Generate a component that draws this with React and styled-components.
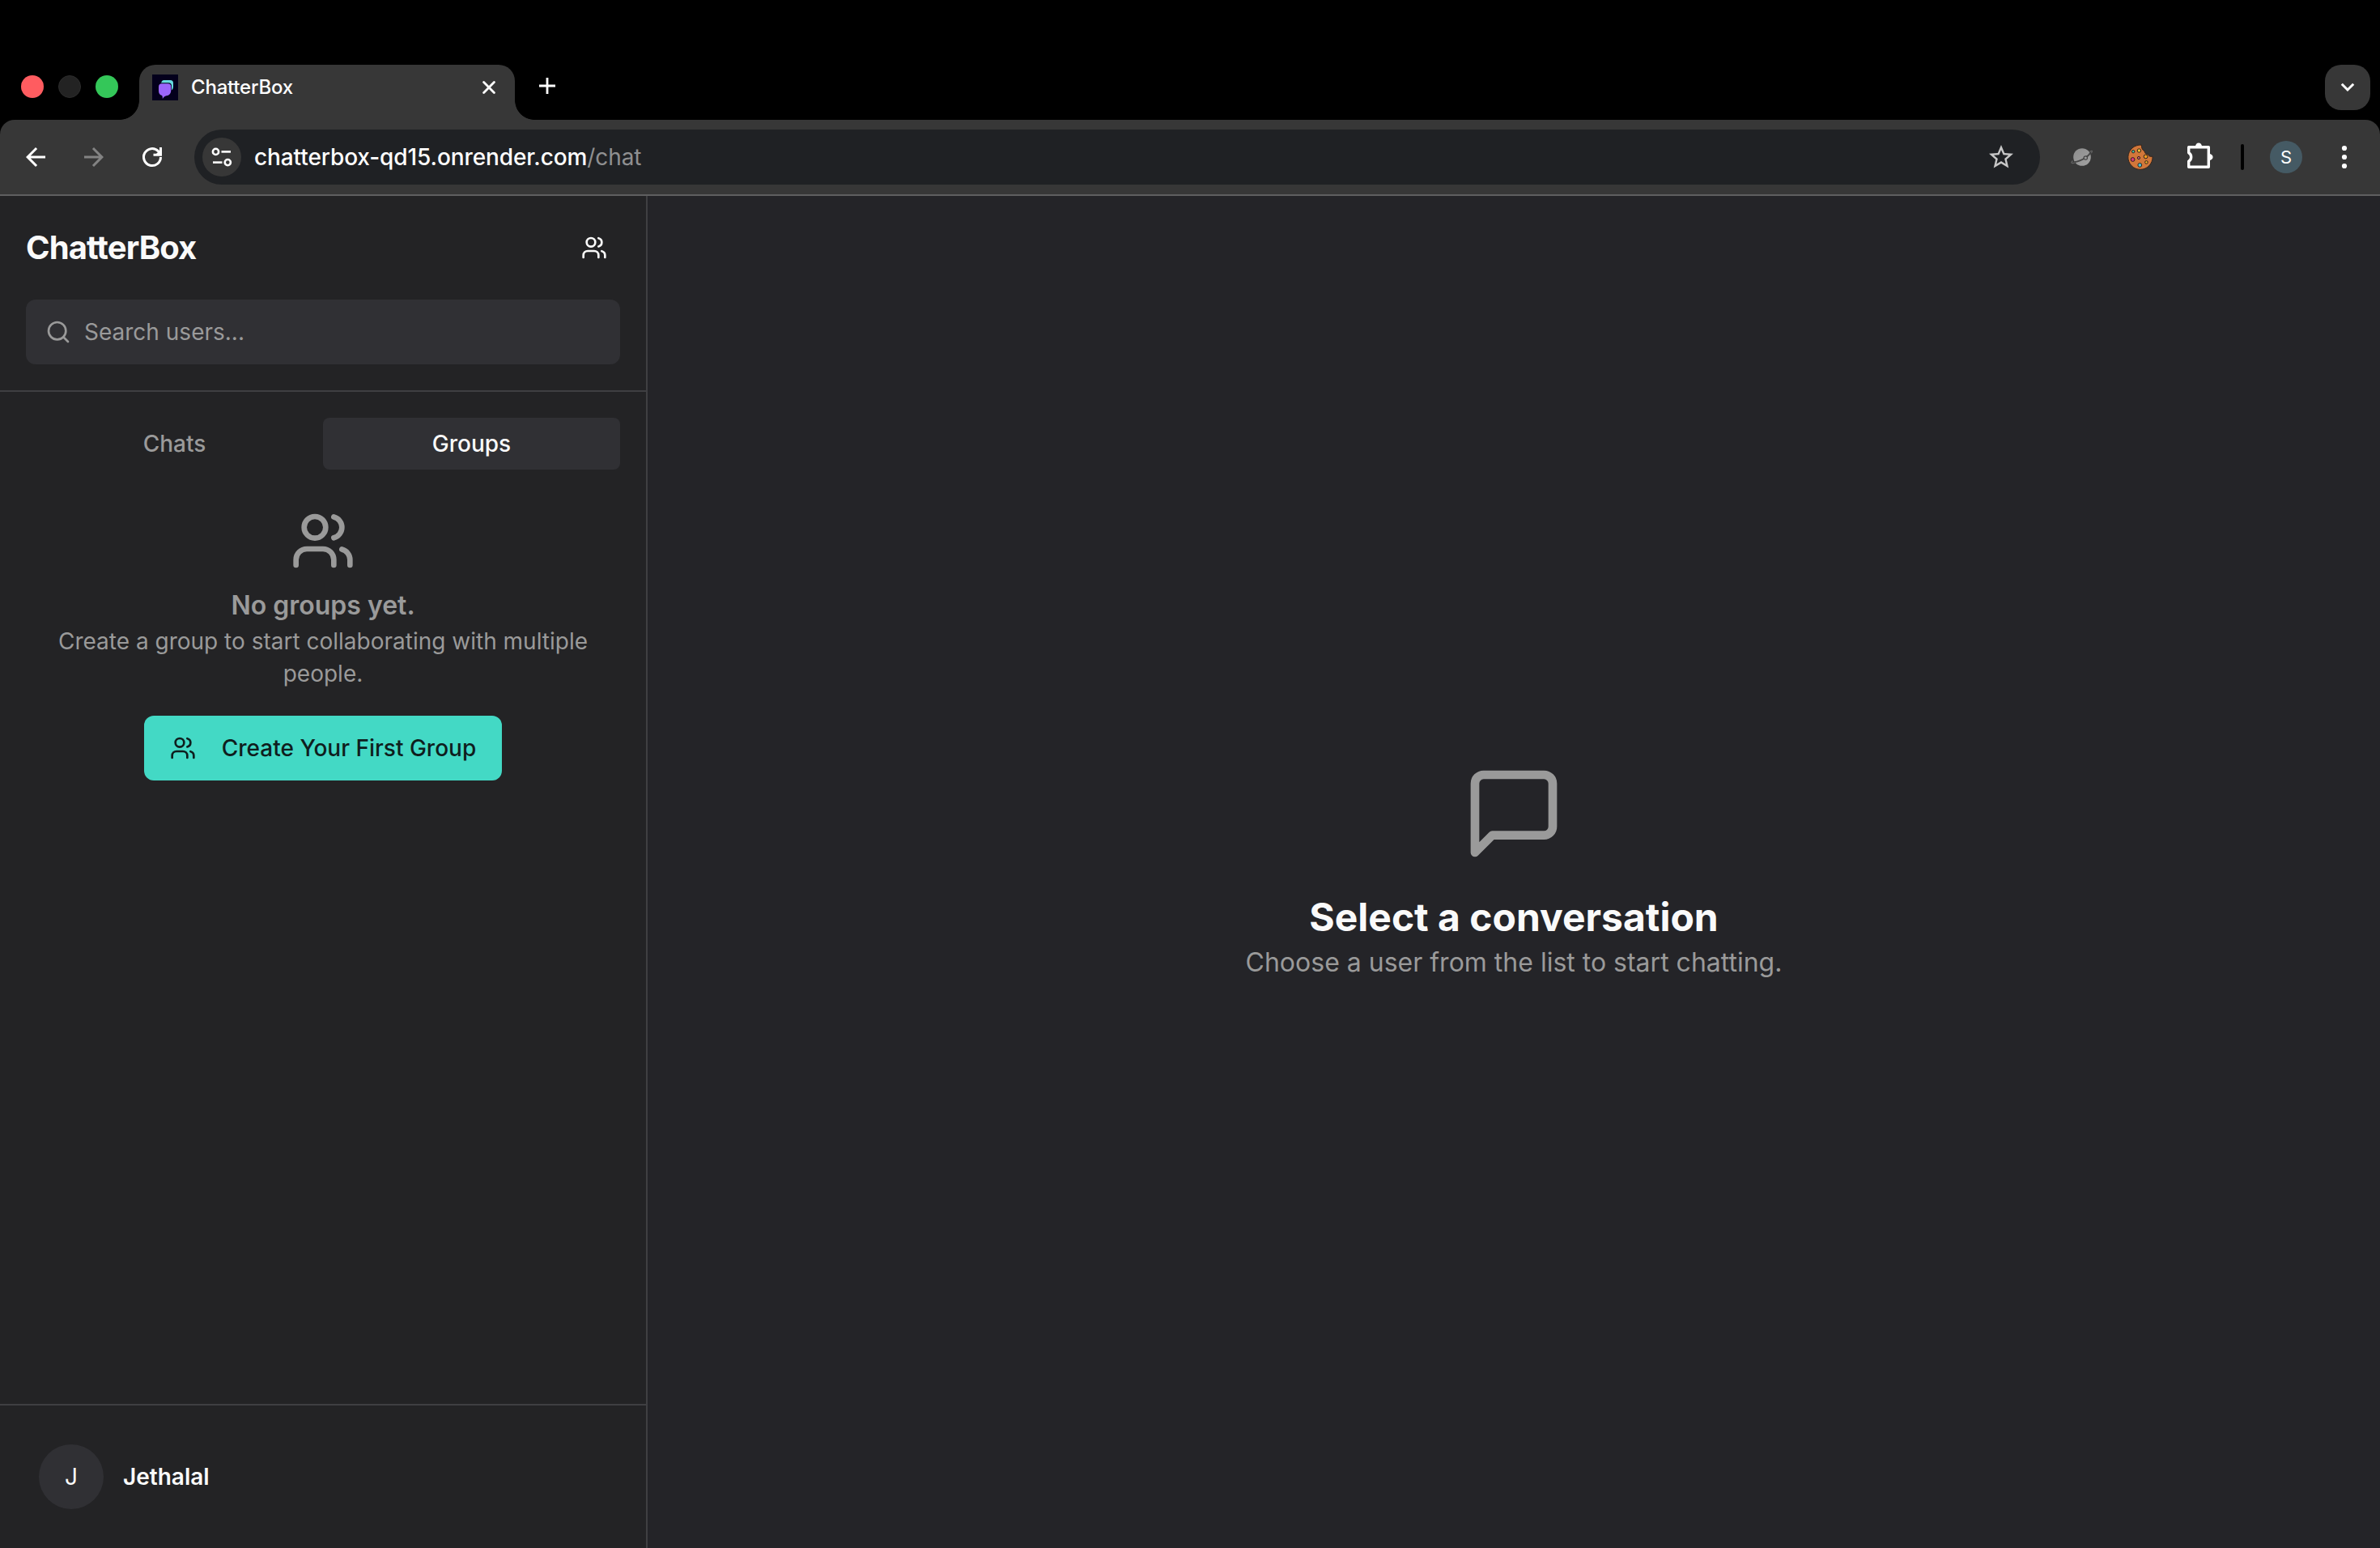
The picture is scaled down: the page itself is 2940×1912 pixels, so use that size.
import React from "react";
import styled, { createGlobalStyle, css } from "styled-components";
import { MdArrowBack, MdArrowForward, MdStarBorder } from "react-icons/md";

const color = {
  strip: "#000000",
  chrome: "#373737",
  omnibox: "#1f2124",
  chromeLine: "#5f5f60",
  sidebar: "#232325",
  main: "#242428",
  muted: "#303034",
  border: "#3f3f42",
  text: "#fafafa",
  dim: "#9a9a9a",
  accent: "#43d9c5",
};

const GlobalStyle = createGlobalStyle`
  *, *::before, *::after { box-sizing: border-box; }
  body {
    margin: 0;
    background: #000;
    font-family: Inter, "Liberation Sans", sans-serif;
    -webkit-font-smoothing: antialiased;
    overflow: hidden;
  }
  button, input { font: inherit; border: 0; padding: 0; background: none; color: inherit; }
  h1, h2, p { margin: 0; }
  svg { display: block; flex: none; }
`;

const Window = styled.div`
  width: 2940px;
  height: 1912px;
  display: flex;
  flex-direction: column;
  background: ${color.strip};
`;

/* ---------- browser tab strip ---------- */

const TabStrip = styled.header`
  height: 148px;
  padding: 80px 12px 0 26px;
  display: flex;
  align-items: stretch;
`;

const Lights = styled.div`
  display: flex;
  gap: 18px;
  padding-top: 13px;
  width: 146px;
`;

const Light = styled.span`
  width: 28px;
  height: 28px;
  border-radius: 50%;
  background: ${(p) => p.$fill};
  ${(p) => p.$ring && css`border: 1px solid ${p.$ring};`}
`;

const Tab = styled.div`
  position: relative;
  width: 464px;
  height: 68px;
  padding: 12px 24px 0 16px;
  display: flex;
  align-items: flex-start;
  border-radius: 20px 20px 0 0;
  background: ${color.chrome};
  color: #fff;

  &::before,
  &::after {
    content: "";
    position: absolute;
    bottom: 0;
    width: 24px;
    height: 24px;
  }
  &::before {
    left: -24px;
    background: radial-gradient(circle at 0 0, transparent 23.5px, ${color.chrome} 24.2px);
  }
  &::after {
    right: -24px;
    background: radial-gradient(circle at 100% 0, transparent 23.5px, ${color.chrome} 24.2px);
  }
`;

const TabTitle = styled.span`
  flex: 1;
  margin-left: 16px;
  font-size: 24px;
  line-height: 32px;
  font-weight: 500;
  letter-spacing: -0.2px;
`;

const TabClose = styled.button`
  padding-top: 8px;
`;

const NewTab = styled.button`
  margin-left: 30px;
  height: 52px;
  display: flex;
  align-items: center;
`;

const TabSearch = styled.button`
  margin-left: auto;
  width: 56px;
  height: 56px;
  border-radius: 20px;
  background: ${color.chrome};
  display: grid;
  place-items: center;
`;

/* ---------- browser toolbar ---------- */

const Toolbar = styled.nav`
  height: 94px;
  padding: 0 12px 0 8px;
  display: flex;
  align-items: center;
  background: ${color.chrome};
  border-bottom: 2px solid ${color.chromeLine};
  border-radius: 18px 18px 0 0;
`;

const Slot = styled.div`
  width: ${(p) => p.$width || 72}px;
  height: 72px;
  display: grid;
  place-items: center;
  color: ${(p) => p.$color || "#fff"};
`;

const Omnibox = styled.div`
  flex: 1;
  height: 68px;
  margin: 0 16px;
  padding: 0 30px 0 10px;
  border-radius: 34px;
  background: ${color.omnibox};
  display: flex;
  align-items: center;
`;

const SiteInfo = styled.button`
  width: 48px;
  height: 48px;
  border-radius: 50%;
  background: ${color.chrome};
  display: grid;
  place-items: center;
`;

const Url = styled.span`
  flex: 1;
  margin-left: 16px;
  font-size: 28px;
  line-height: 36px;
  font-weight: 500;
  letter-spacing: -0.1px;
  color: #fff;
`;

const UrlPath = styled.span`
  font-weight: 400;
  color: #8f9091;
`;

const Divider = styled.span`
  width: 4px;
  height: 32px;
  border-radius: 2px;
  background: #000;
`;

const Profile = styled.span`
  width: 40px;
  height: 40px;
  border-radius: 50%;
  background: #455a64;
  color: #fff;
  font-size: 22px;
  line-height: 40px;
  text-align: center;
`;

/* ---------- page ---------- */

const Page = styled.div`
  flex: 1;
  min-height: 0;
  display: flex;
`;

const Sidebar = styled.aside`
  width: 800px;
  display: flex;
  flex-direction: column;
  background: ${color.sidebar};
  border-right: 2px solid ${color.border};
  color: ${color.text};
`;

const SidebarHead = styled.div`
  padding: 32px;
  display: flex;
  flex-direction: column;
  gap: 32px;
  border-bottom: 2px solid ${color.border};
`;

const BrandRow = styled.div`
  height: 64px;
  display: flex;
  align-items: center;
  justify-content: space-between;
`;

const Brand = styled.h1`
  font-size: 40px;
  line-height: 56px;
  font-weight: 700;
  letter-spacing: -0.9px;
`;

const IconButton = styled.button`
  width: 64px;
  height: 64px;
  display: grid;
  place-items: center;
`;

const SearchField = styled.label`
  height: 80px;
  padding: 0 24px;
  display: flex;
  align-items: center;
  gap: 16px;
  border-radius: 12px;
  background: ${color.muted};
  color: ${color.dim};
`;

const SearchInput = styled.input`
  flex: 1;
  font-size: 28px;
  line-height: 40px;
  outline: none;
  &::placeholder { color: ${color.dim}; opacity: 1; }
`;

const Tabs = styled.div`
  padding: 32px 32px 0;
  display: grid;
  grid-template-columns: 1fr 1fr;
`;

const TabButton = styled.button`
  height: 64px;
  border-radius: 8px;
  font-size: 28px;
  line-height: 40px;
  font-weight: 500;
  color: ${(p) => (p.$active ? color.text : color.dim)};
  background: ${(p) => (p.$active ? color.muted : "transparent")};
`;

const EmptyGroups = styled.section`
  flex: 1;
  padding: 48px 64px 0;
  display: flex;
  flex-direction: column;
  align-items: center;
  text-align: center;
  color: ${color.dim};
`;

const EmptyTitle = styled.p`
  margin-top: 16px;
  font-size: 32px;
  line-height: 48px;
  font-weight: 600;
`;

const EmptyText = styled.p`
  font-size: 28px;
  line-height: 40px;
`;

const PrimaryButton = styled.button`
  margin-top: 32px;
  height: 80px;
  padding: 0 32px;
  display: flex;
  align-items: center;
  gap: 32px;
  border-radius: 12px;
  background: ${color.accent};
  color: #0f1e1e;
  font-size: 28px;
  font-weight: 500;
  white-space: nowrap;
`;

const Account = styled.footer`
  height: 178px;
  padding: 0 48px;
  display: flex;
  align-items: center;
  gap: 24px;
  border-top: 2px solid ${color.border};
`;

const Avatar = styled.span`
  width: 80px;
  height: 80px;
  border-radius: 50%;
  background: ${color.muted};
  font-size: 28px;
  line-height: 80px;
  text-align: center;
`;

const AccountName = styled.span`
  font-size: 28px;
  line-height: 40px;
  font-weight: 600;
`;

const Main = styled.main`
  flex: 1;
  display: flex;
  flex-direction: column;
  align-items: center;
  justify-content: center;
  background: ${color.main};
  color: ${color.dim};
`;

const MainTitle = styled.h2`
  margin-top: 32px;
  font-size: 48px;
  line-height: 64px;
  font-weight: 700;
  color: ${color.text};
`;

const MainText = styled.p`
  font-size: 32px;
  line-height: 48px;
`;

/* ---------- icons ---------- */

const Stroke = ({ size, children }) => (
  <svg width={size} height={size} viewBox="0 0 24 24" fill="none" stroke="currentColor"
    strokeWidth="2" strokeLinecap="round" strokeLinejoin="round">
    {children}
  </svg>
);

const UsersIcon = ({ size }) => (
  <Stroke size={size}>
    <path d="M16 21v-2a4 4 0 0 0-4-4H6a4 4 0 0 0-4 4v2" />
    <circle cx="9" cy="7" r="4" />
    <path d="M22 21v-2a4 4 0 0 0-3-3.87" />
    <path d="M16 3.13a4 4 0 0 1 0 7.75" />
  </Stroke>
);

const SearchIcon = ({ size }) => (
  <Stroke size={size}>
    <circle cx="11" cy="11" r="8" />
    <path d="m21 21-4.3-4.3" />
  </Stroke>
);

const MessageIcon = ({ size }) => (
  <Stroke size={size}>
    <path d="M21 15a2 2 0 0 1-2 2H7l-4 4V5a2 2 0 0 1 2-2h14a2 2 0 0 1 2 2z" />
  </Stroke>
);

const Favicon = () => (
  <svg width="32" height="32" viewBox="0 0 32 32">
    <rect width="32" height="32" fill="#04001c" />
    <path d="M14.500 7h8a3.500 3.500 0 0 1 3.500 3.500v4.500c0 2.200-1 4-2.800 5L11 11.500C11 9 12.500 7 14.500 7z" fill="#66dbe0" />
    <path d="M12 10.200h8a4 4 0 0 1 4 4V19c0 4.500-2 7.500-5.800 7.500H9.500L7.500 20v-5.300a4.500 4.500 0 0 1 4.500-4.500z" fill="#04001c" />
    <path d="M12 11.200h7.300a4 4 0 0 1 4 4V19c0 4.500-2.200 7.200-5.800 7.200-2 .3-3.500 1.800-4.700 3.800.2-1.500 0-2.800-.6-4C9.300 25.200 8 23.500 8 20v-4.800a4 4 0 0 1 4-4z" fill="#9b66fb" />
  </svg>
);

const ReloadIcon = () => (
  <svg width="36" height="36" viewBox="0 0 36 36" fill="none" stroke="currentColor" strokeWidth="3">
    <path d="M28.500 18a10.500 10.500 0 1 1-3.100-7.400l1.600 1.600" />
    <path d="M28.500 6v9.200H19.500" />
    <path d="M29 8v7h-7z" fill="currentColor" stroke="none" />
  </svg>
);

const TuneIcon = () => (
  <svg width="28" height="28" viewBox="0 0 28 28" fill="none" stroke="#fff" strokeWidth="2.600">
    <circle cx="6.500" cy="7.400" r="3.600" />
    <path d="M13.500 7.400H25" />
    <circle cx="21.300" cy="20.600" r="3.600" />
    <path d="M3 20.600h11.500" />
  </svg>
);

const PlanetIcon = () => (
  <svg width="32" height="32" viewBox="0 0 32 32" fill="none">
    <defs>
      <linearGradient id="planet" x1="0" y1="0" x2="1" y2="1">
        <stop offset="0" stopColor="#8c8c8c" />
        <stop offset="1" stopColor="#a2a2a2" />
      </linearGradient>
    </defs>
    <circle cx="16" cy="16" r="10.800" fill="url(#planet)" />
    <path d="M6.500 22c5 0 16-5 19.500-11" stroke="#464646" strokeWidth="1.900" />
    <path d="M4.500 20.500c-3 3-1.500 3.700 2.500 2.700M25.500 9.500c3-1.800 4-1.400 1.700 1.700" stroke="#626262" strokeWidth="1.300" />
    <circle cx="20.300" cy="17" r="2.200" fill="#9a9a9a" stroke="#464646" strokeWidth="1.200" />
  </svg>
);

const chips = [
  [7.2, 9.2, 1.7, "#43c9a8"],
  [14.4, 8, 2.2, "#f2c230"],
  [6.6, 19, 2.4, "#d93a7c"],
  [14, 17, 1.6, "#d8607a"],
  [22.6, 15.4, 2.4, "#f09a1e"],
  [23.4, 22.4, 1.8, "#f0ae2a"],
  [15.3, 25.9, 2.4, "#4dbfd0"],
];

const CookieIcon = () => (
  <svg width="32" height="32" viewBox="0 0 32 32">
    <path d="M17.500 1.200A15.100 15.100 0 1 0 31 15.200c-3.200.6-5-.4-5.400-2.800-2.800.2-4.400-1-4.400-3.600C18.600 7.600 17 4.700 17.500 1.200z"
      fill="#d2773a" stroke="#33241c" strokeWidth="1" />
    {chips.map(([x, y, r, fill]) => (
      <circle key={`${x}-${y}`} cx={x} cy={y} r={r} fill={fill} stroke="#2c2220" strokeWidth="1" />
    ))}
  </svg>
);

const PuzzleIcon = () => (
  <svg width="32" height="36" viewBox="2 0 32 36" fill="none" stroke="currentColor" strokeWidth="3.400" strokeLinejoin="round">
    <path d="M3.700 5.700H28.300V30.300H3.700V23.200a6 6 0 0 0 0-10.400z" />
    <path d="M12 5a4 4.600 0 0 1 8 0zM29 14a4.600 4 0 0 1 0 8z" fill="currentColor" stroke="none" />
  </svg>
);

const MenuDots = () => (
  <svg width="8" height="32" viewBox="0 0 8 32" fill="#fff">
    <circle cx="4" cy="5" r="3.100" />
    <circle cx="4" cy="16" r="3.100" />
    <circle cx="4" cy="27" r="3.100" />
  </svg>
);

export default function App() {
  return (
    <Window>
      <GlobalStyle />
      <TabStrip>
        <Lights>
          <Light $fill="#ff5c60" />
          <Light $fill="#232323" $ring="#2c2c2c" />
          <Light $fill="#34c759" />
        </Lights>
        <Tab>
          <Favicon />
          <TabTitle>ChatterBox</TabTitle>
          <TabClose aria-label="Close tab">
            <svg width="16" height="16" viewBox="0 0 16 16" stroke="#fff" strokeWidth="2.800" strokeLinecap="round">
              <path d="M1.600 1.600l12.800 12.800M14.400 1.600L1.600 14.400" />
            </svg>
          </TabClose>
        </Tab>
        <NewTab aria-label="New tab">
          <svg width="20" height="20" viewBox="0 0 20 20" stroke="#fff" strokeWidth="2.800">
            <path d="M10 0v20M0 10h20" />
          </svg>
        </NewTab>
        <TabSearch aria-label="Search tabs">
          <svg width="18" height="12" viewBox="0 0 18 12" fill="none" stroke="#fff" strokeWidth="3">
            <path d="M1.800 1.800L9 9l7.200-7.200" />
          </svg>
        </TabSearch>
      </TabStrip>

      <Toolbar>
        <Slot><MdArrowBack size={36} /></Slot>
        <Slot $color="#838383"><MdArrowForward size={36} /></Slot>
        <Slot><ReloadIcon /></Slot>
        <Omnibox>
          <SiteInfo aria-label="Site information"><TuneIcon /></SiteInfo>
          <Url>chatterbox-qd15.onrender.com<UrlPath>/chat</UrlPath></Url>
          <MdStarBorder size={36} color="#c7c7c7" />
        </Omnibox>
        <Slot><PlanetIcon /></Slot>
        <Slot><CookieIcon /></Slot>
        <Slot $width={76}><PuzzleIcon /></Slot>
        <Slot $width={28}><Divider /></Slot>
        <Slot $width={80}><Profile>S</Profile></Slot>
        <Slot $width={64}><MenuDots /></Slot>
      </Toolbar>

      <Page>
        <Sidebar>
          <SidebarHead>
            <BrandRow>
              <Brand>ChatterBox</Brand>
              <IconButton aria-label="New group"><UsersIcon size={32} /></IconButton>
            </BrandRow>
            <SearchField>
              <SearchIcon size={32} />
              <SearchInput placeholder="Search users..." />
            </SearchField>
          </SidebarHead>
          <Tabs>
            <TabButton>Chats</TabButton>
            <TabButton $active>Groups</TabButton>
          </Tabs>
          <EmptyGroups>
            <UsersIcon size={80} />
            <EmptyTitle>No groups yet.</EmptyTitle>
            <EmptyText>Create a group to start collaborating with multiple people.</EmptyText>
            <PrimaryButton>
              <UsersIcon size={32} />
              Create Your First Group
            </PrimaryButton>
          </EmptyGroups>
          <Account>
            <Avatar>J</Avatar>
            <AccountName>Jethalal</AccountName>
          </Account>
        </Sidebar>
        <Main>
          <MessageIcon size={128} />
          <MainTitle>Select a conversation</MainTitle>
          <MainText>Choose a user from the list to start chatting.</MainText>
        </Main>
      </Page>
    </Window>
  );
}
